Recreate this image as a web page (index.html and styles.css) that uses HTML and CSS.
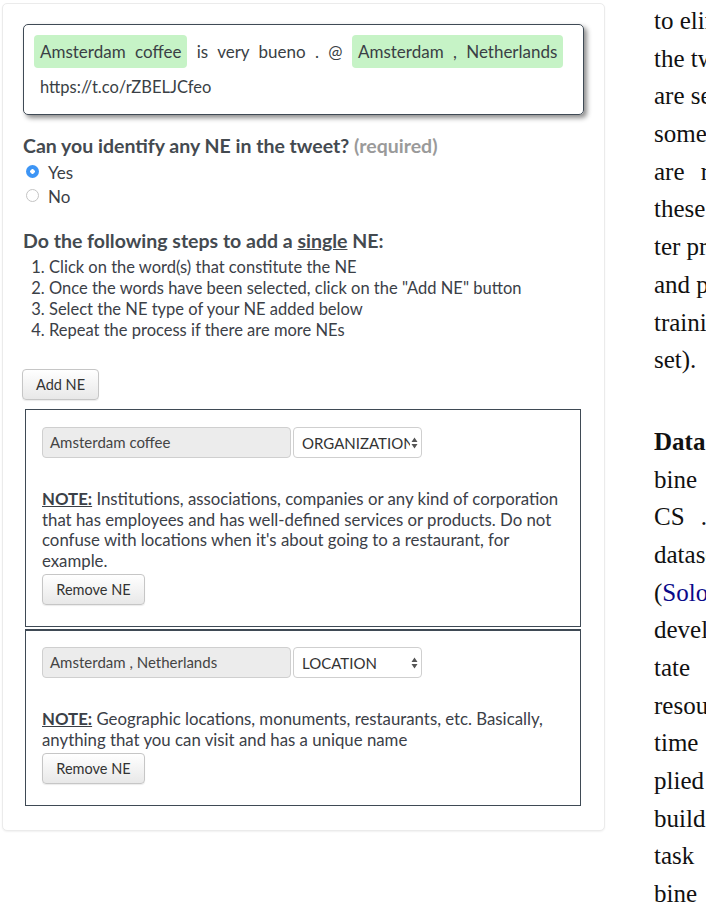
FILE: index.html
```html
<!DOCTYPE html>
<html>
<head>
<meta charset="utf-8">
<link rel="stylesheet" href="styles.css">
</head>
<body>
<div class="panel">
  <div class="tweet">
    <div class="tweet-line">
      <span class="ent">Amsterdam coffee</span> is very bueno . @ <span class="ent">Amsterdam , Netherlands</span>
    </div>
    <div class="tweet-url">https://t.co/rZBELJCfeo</div>
  </div>

  <h2 class="q">Can you identify any NE in the tweet? <span class="req">(required)</span></h2>
  <div class="radio-row"><span class="radio checked"></span><span>Yes</span></div>
  <div class="radio-row"><span class="radio"></span><span>No</span></div>

  <h2 class="q steps-title">Do the following steps to add a <u>single</u> NE:</h2>
  <ol class="steps">
    <li>Click on the word(s) that constitute the NE</li>
    <li>Once the words have been selected, click on the "Add NE" button</li>
    <li>Select the NE type of your NE added below</li>
    <li>Repeat the process if there are more NEs</li>
  </ol>

  <button class="btn add-btn">Add NE</button>

  <div class="entity">
    <div class="entity-row">
      <div class="ent-input">Amsterdam coffee</div>
      <div class="ent-select"><span class="sel-text">ORGANIZATION</span><svg class="sel-arrows" width="7" height="12" viewBox="0 0 7 12"><path d="M3.5 0.5 L6.5 5 L0.5 5 Z M3.5 11.5 L6.5 7 L0.5 7 Z" fill="#555"/></svg></div>
    </div>
    <p class="note"><u class="note-label">NOTE:</u> Institutions, associations, companies or any kind of corporation that has employees and has well-defined services or products. Do not confuse with locations when it's about going to a restaurant, for example.</p>
    <button class="btn rm-btn">Remove NE</button>
  </div>

  <div class="entity second">
    <div class="entity-row">
      <div class="ent-input">Amsterdam , Netherlands</div>
      <div class="ent-select"><span class="sel-text">LOCATION</span><svg class="sel-arrows" width="7" height="12" viewBox="0 0 7 12"><path d="M3.5 0.5 L6.5 5 L0.5 5 Z M3.5 11.5 L6.5 7 L0.5 7 Z" fill="#555"/></svg></div>
    </div>
    <p class="note"><u class="note-label">NOTE:</u> Geographic locations, monuments, restaurants, etc. Basically, anything that you can visit and has a unique name</p>
    <button class="btn rm-btn">Remove NE</button>
  </div>
</div>

<div class="paper">
  <div class="para">
    <div class="ln">to eliminate</div>
    <div class="ln">the tweets</div>
    <div class="ln">are selected</div>
    <div class="ln">some</div>
    <div class="ln wide">are removed</div>
    <div class="ln">these</div>
    <div class="ln">ter pre</div>
    <div class="ln">and pre</div>
    <div class="ln">training</div>
    <div class="ln">set).</div>
  </div>
  <div class="para">
    <div class="ln"><b>Data</b></div>
    <div class="ln">bine</div>
    <div class="ln wide">CS .</div>
    <div class="ln">datasets</div>
    <div class="ln">(<span class="cite">Solorio</span></div>
    <div class="ln">develop</div>
    <div class="ln wide">tate</div>
    <div class="ln">resources</div>
    <div class="ln">time</div>
    <div class="ln">plied</div>
    <div class="ln">build</div>
    <div class="ln">task</div>
    <div class="ln">bine</div>
  </div>
</div>
</body>
</html>
```

FILE: styles.css
```css
html, body {
  margin: 0;
  padding: 0;
  overflow: hidden;
  background: #fff;
}

body {
  display: flex;
  align-items: flex-start;
  width: 706px;
  height: 909px;
  font-family: Lato, "Open Sans", sans-serif;
  color: #3b4047;
}

.panel {
  box-sizing: border-box;
  width: 603px;
  margin: 3px 0 0 2px;
  padding: 20px 20px 24px 20px;
  border: 1px solid #ebebeb;
  border-radius: 5px;
  background: #fff;
  box-shadow: 0 1px 2px rgba(0,0,0,0.06);
  flex-shrink: 0;
}

.tweet {
  border: 1px solid #3f4a55;
  border-radius: 5px;
  padding: 12px 10px 17px 10px;
  box-shadow: 3px 3px 5px rgba(0,0,0,0.45);
  font-size: 17px;
  color: #3a3f45;
}

.tweet-line {
  line-height: 30px;
  word-spacing: 5px;
}

.ent {
  background: #c6f3c6;
  border-radius: 4px;
  padding: 6px 6px;
}

.tweet-url {
  margin-top: 10px;
  padding-left: 6px;
  line-height: 20px;
  font-size: 16.5px;
}

.q {
  font-size: 19.5px;
  font-weight: bold;
  margin: 19px 0 2px 0;
  line-height: 24px;
  color: #444a50;
}

.req {
  color: #9a9a9a;
}

.radio-row {
  display: flex;
  align-items: center;
  gap: 9px;
  height: 24px;
  font-size: 17px;
  padding-left: 3px;
}

.radio {
  box-sizing: border-box;
  width: 13px;
  height: 13px;
  border-radius: 50%;
  border: 1px solid #c4c4c4;
  background: #fff;
  position: relative;
  top: -1px;
}

.radio.checked {
  border: none;
  background: radial-gradient(circle, #fff 0 2px, #3d95f5 2.5px);
}

.steps-title {
  margin-top: 21px;
  margin-bottom: 4px;
}

.steps {
  margin: 0;
  padding-left: 26px;
  font-size: 16.5px;
  line-height: 21px;
  color: #3b4047;
}

.btn {
  font-family: Lato, "Open Sans", sans-serif;
  font-size: 14.5px;
  color: #333;
  background: linear-gradient(#ffffff, #e8e8e8);
  border: 1px solid #c6c6c6;
  border-radius: 4px;
  height: 31px;
  box-shadow: 0 1px 1px rgba(0,0,0,0.08);
  display: block;
}

.add-btn {
  margin: 28px 0 9px -1px;
  width: 77px;
}

.entity {
  border: 1px solid #3f4a55;
  margin: 0 3px 0 2px;
  padding: 17px 16px 21px 16px;
}

.entity.second {
  margin-top: 2px;
  border-top-width: 2px;
  padding-top: 16px;
}

.entity-row {
  display: flex;
  gap: 2px;
}

.ent-input {
  box-sizing: border-box;
  width: 249px;
  height: 31px;
  background: #ececec;
  border: 1px solid #cfcfcf;
  border-radius: 4px;
  padding-left: 7px;
  font-size: 15px;
  line-height: 29px;
  color: #444;
}

.ent-select {
  box-sizing: border-box;
  width: 129px;
  height: 31px;
  border: 1px solid #cfcfcf;
  border-radius: 4px;
  display: flex;
  align-items: center;
  padding: 0 3px 0 8px;
  font-size: 15px;
  color: #333;
}

.sel-text {
  width: 108px;
  flex-shrink: 0;
  overflow: hidden;
  white-space: nowrap;
}

.sel-arrows {
  margin-left: auto;
  flex-shrink: 0;
}

.note {
  margin: 31px 0 3px 0;
  font-size: 16.8px;
  line-height: 20.5px;
  color: #3b4047;
}

.note-label {
  font-weight: bold;
}

.rm-btn {
  width: 103px;
}

.paper {
  margin-left: 49px;
  width: 52px;
  overflow: hidden;
  padding-top: 2px;
  font-family: "Liberation Serif", "Times New Roman", serif;
  font-size: 25px;
  color: #111;
  flex-shrink: 0;
}

.para + .para {
  margin-top: 44px;
}

.ln {
  white-space: nowrap;
  line-height: 37.7px;
  height: 37.7px;
}

.ln.wide {
  word-spacing: 10px;
}

.cite {
  color: #0a0a8a;
}
```
